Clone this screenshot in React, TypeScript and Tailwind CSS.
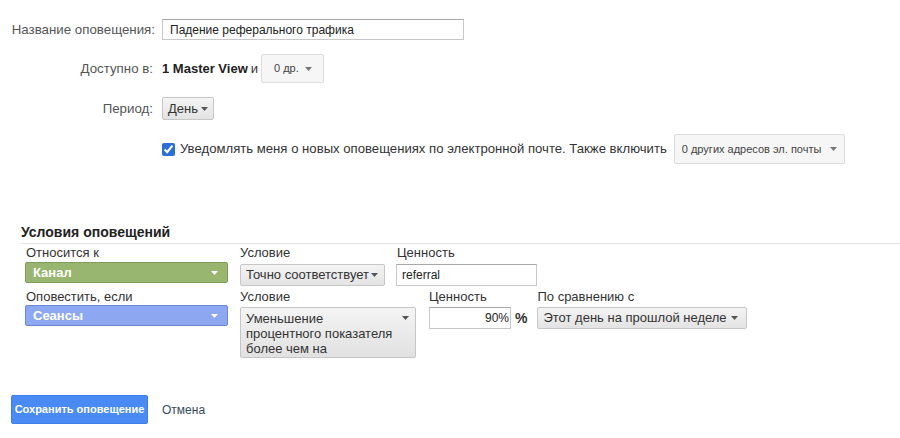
import React from "react";

// small down-pointing caret used by all dropdowns
function Caret({ color = "#555" }: { color?: string }) {
  return (
    <svg width="7" height="4" viewBox="0 0 7 4" className="shrink-0">
      <path d="M0 0 L7 0 L3.5 4 Z" fill={color} />
    </svg>
  );
}

function GreyDrop({
  text,
  className = "",
}: {
  text: React.ReactNode;
  className?: string;
}) {
  return (
    <div
      className={
        "flex items-center justify-between border border-[#c6c6c6] rounded-[2px] bg-gradient-to-b from-[#f4f4f4] to-[#e3e3e3] text-[13px] text-[#333] px-[6px] " +
        className
      }
    >
      <span>{text}</span>
      <Caret />
    </div>
  );
}

function FlatDrop({ text, className = "" }: { text: string; className?: string }) {
  return (
    <div
      className={
        "flex items-center justify-between border border-[#dcdcdc] rounded-[2px] bg-[#f6f6f6] text-[11px] text-[#444] " +
        className
      }
    >
      <span>{text}</span>
      <Caret color="#777" />
    </div>
  );
}

export default function App() {
  return (
    <div className="w-[900px] h-[438px] bg-white font-['Liberation_Sans',Arial,sans-serif] text-[13px] text-[#222] overflow-hidden">
      {/* alert settings */}
      <div className="pt-[19px]">
        <div className="flex items-center h-[21px]">
          <div className="w-[155px] text-right text-[13.3px] text-[#555]">Название оповещения:</div>
          <div className="ml-[7px] w-[302px] h-[21px] border border-[#c8c8c8] border-t-[#a8a8a8] px-[7px] flex items-center text-[12px] text-[#222]">
            Падение реферального трафика
          </div>
        </div>

        <div className="flex items-center h-[29px] mt-[14px]">
          <div className="w-[153px] text-right text-[13.3px] text-[#555]">Доступно в:</div>
          <div className="ml-[9px] flex items-center">
            <span className="font-bold text-[13px] text-[#222]">1 Master View</span>
            <span className="ml-[3px] text-[#333]">и</span>
            <FlatDrop text="0 др." className="ml-[3px] w-[63px] h-[29px] pl-[12px] pr-[11px]" />
          </div>
        </div>

        <div className="flex items-center h-[23px] mt-[14px]">
          <div className="w-[153px] text-right text-[13.3px] text-[#555]">Период:</div>
          <GreyDrop text="День" className="ml-[9px] w-[52px] h-[23px] pl-[5px] pr-[5px]" />
        </div>

        <div className="flex items-center h-[30px] mt-[14px] pl-[162px]">
          <input
            type="checkbox"
            defaultChecked
            className="w-[13px] h-[13px] accent-[#2a6fd6] m-0"
          />
          <span className="ml-[5px] text-[13.15px] text-[#333]">
            Уведомлять меня о новых оповещениях по электронной почте. Также включить
          </span>
          <FlatDrop
            text="0 других адресов эл. почты"
            className="ml-[7px] w-[171px] h-[30px] pl-[7px] pr-[7px]"
          />
        </div>
      </div>

      {/* alert conditions */}
      <div className="mt-[60px] pl-[21px]">
        <div className="h-[20px] border-b border-[#e3e3e3] font-bold text-[14px] text-[#222] leading-[16px]">
          Условия оповещений
        </div>

        <div className="flex items-start pl-[4px] mt-[1px]">
          <div className="w-[203px] flex flex-col">
            <div className="pl-[1px] leading-[16px] text-[#333]">Относится к</div>
            <div className="mt-[1px] h-[21px] rounded-[2px] border border-[#7f9c58] bg-[#98b66f] flex items-center justify-between pl-[7px] pr-[9px] text-white font-bold">
              <span>Канал</span>
              <Caret color="#fff" />
            </div>
          </div>
          <div className="ml-[12px] flex flex-col">
            <div className="leading-[16px] text-[#333]">Условие</div>
            <GreyDrop text="Точно соответствует" className="mt-[3px] w-[145px] h-[22px] pl-[5px]" />
          </div>
          <div className="ml-[11px] flex flex-col">
            <div className="pl-[1px] leading-[16px] text-[#333]">Ценность</div>
            <div className="mt-[3px] w-[141px] h-[22px] border border-[#c8c8c8] border-t-[#a8a8a8] flex items-center px-[5px] text-[12px]">
              referral
            </div>
          </div>
        </div>

        <div className="flex items-start pl-[4px] mt-[3px]">
          <div className="w-[203px] flex flex-col">
            <div className="pl-[1px] leading-[16px] text-[#333]">Оповестить, если</div>
            <div className="mt-[0px] h-[21px] rounded-[2px] border border-[#6b88d4] bg-[#8da8f0] flex items-center justify-between pl-[7px] pr-[9px] text-white font-bold">
              <span>Сеансы</span>
              <Caret color="#fff" />
            </div>
          </div>
          <div className="ml-[12px] flex flex-col">
            <div className="leading-[16px] text-[#333]">Условие</div>
            <div className="mt-[2px] w-[176px] h-[51px] border border-[#c6c6c6] rounded-[2px] bg-gradient-to-b from-[#f4f4f4] to-[#e1e1e1] flex items-start justify-between pl-[5px] pr-[6px] pt-[3px] text-[13px] text-[#333] leading-[15px]">
              <span>
                Уменьшение
                <br />
                процентного показателя
                <br />
                более чем на
              </span>
              <span className="mt-[5px]">
                <Caret />
              </span>
            </div>
          </div>
          <div className="ml-[13px] flex flex-col">
            <div className="leading-[16px] text-[#333]">Ценность</div>
            <div className="mt-[2px] flex items-center">
              <div className="w-[82px] h-[22px] border border-[#c8c8c8] border-t-[#a8a8a8] flex items-center justify-end pr-[1px] text-[12px]">
                90%
              </div>
              <span className="ml-[4px] font-bold text-[14px] text-[#333]">%</span>
            </div>
          </div>
          <div className="ml-[10px] flex flex-col">
            <div className="leading-[16px] text-[#333]">По сравнению с</div>
            <GreyDrop
              text="Этот день на прошлой неделе"
              className="mt-[2px] w-[210px] h-[22px] pl-[5px] pr-[8px]"
            />
          </div>
        </div>
      </div>

      {/* actions */}
      <div className="flex items-center mt-[37px] pl-[11px]">
        <button
          type="button"
          className="w-[137px] h-[29px] rounded-[2px] bg-[#4a8af4] border border-[#3f7ee6] text-white font-bold text-[11px]"
        >
          Сохранить оповещение
        </button>
        <span className="ml-[14px] text-[12px] text-[#3a4a5c]">Отмена</span>
      </div>
    </div>
  );
}
